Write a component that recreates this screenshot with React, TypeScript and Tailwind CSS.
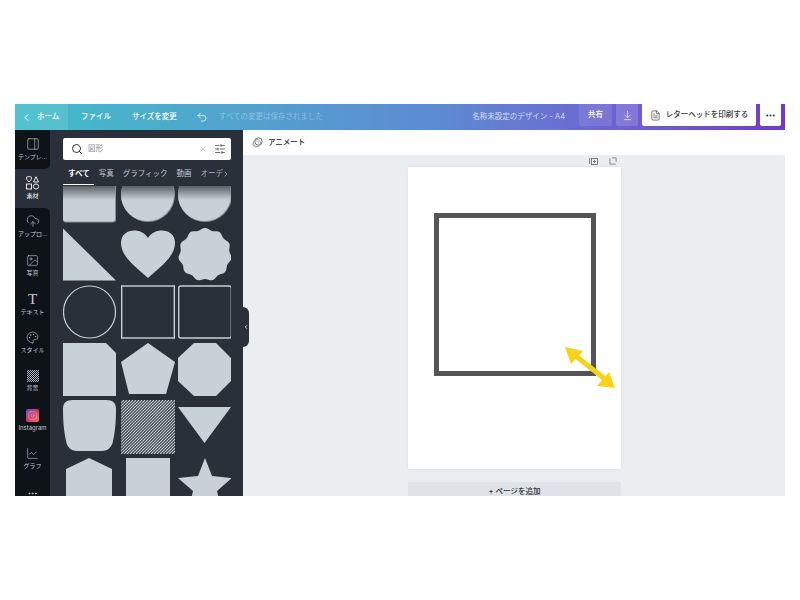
import { ChevronLeft, ChevronRight, Search, X, SlidersHorizontal, Undo2, ArrowDownToLine, FileText, MoreHorizontal, PanelRight, CloudUpload, Image, Palette, LineChart, Instagram } from "lucide-react";
import type { ReactNode } from "react";

const FONT = "font-['Inter','Noto_Sans_CJK_JP',sans-serif]";

function Hatch() {
  return (
    <svg width="12" height="12" viewBox="0 0 12 12" stroke="#c5cbd2" strokeWidth="0.9">
      <clipPath id="hatch-clip">
        <rect width="12" height="12" />
      </clipPath>
      <g clipPath="url(#hatch-clip)">
        {[-10, -8, -6, -4, -2, 0, 2, 4, 6, 8, 10].map((d) => (
          <line key={d} x1={d} y1="12" x2={d + 12} y2="0" />
        ))}
      </g>
    </svg>
  );
}

function ElementsIcon() {
  return (
    <svg width="13" height="14" viewBox="0 0 13 14" fill="none" stroke="currentColor" strokeWidth="0.9">
      <path d="M3 1 C2 0 0.500 0.500 0.500 2 C0.500 3.500 2 5 3 6 C4 5 5.500 3.500 5.500 2 C5.500 0.500 4 0 3 1Z" />
      <path d="M10 0.700 L12.500 6 H7.500Z" />
      <rect x="0.500" y="8" width="5" height="5" />
      <circle cx="10" cy="10.500" r="2.600" />
    </svg>
  );
}

const SIDE = [
  { label: "テンプレ...", icon: <PanelRight size={14} strokeWidth={1.1} /> },
  { label: "素材", icon: <ElementsIcon />, active: true },
  { label: "アップロ...", icon: <CloudUpload size={14} strokeWidth={1.1} /> },
  { label: "写真", icon: <Image size={13} strokeWidth={1.1} /> },
  { label: "テキスト", icon: <span className="font-['Liberation_Serif',serif] text-[15px] font-normal leading-[14px]">T</span> },
  { label: "スタイル", icon: <Palette size={13} strokeWidth={1.1} /> },
  { label: "背景", icon: <Hatch /> },
  { label: "Instagram", icon: <span className="flex h-[13px] w-[13px] items-center justify-center rounded-[2px] bg-gradient-to-br from-[#7a3ab9] via-[#d9306c] to-[#f77737]"><Instagram size={9} strokeWidth={1.5} /></span> },
  { label: "グラフ", icon: <LineChart size={13} strokeWidth={1.1} /> },
];

const F = "#c9d1d8";

// scalloped blob in the second row
const BLOB = Array.from({ length: 96 }, (_, i) => {
  const a = (i / 96) * Math.PI * 2;
  const r = 25.6 + 1.1 * Math.cos(a * 11);
  return `${(27 + r * Math.sin(a)).toFixed(2)},${(26.5 - r * Math.cos(a)).toFixed(2)}`;
}).join(" ");

function Shape({ children }: { children: ReactNode }) {
  return (
    <svg width="54" height="54" viewBox="0 0 54 54" className="block">
      {children}
    </svg>
  );
}

const SHAPES: ReactNode[] = [
  <>
    <defs>
      <linearGradient id="top-shade" gradientUnits="userSpaceOnUse" x1="0" y1="16" x2="0" y2="30">
        <stop offset="0" stopColor="#596068" />
        <stop offset="1" stopColor={F} />
      </linearGradient>
    </defs>
    <rect x="0" y="-6" width="53" height="58.500" rx="3" fill="#8d959d" />
    <rect x="0" y="-6" width="52" height="57.500" rx="3" fill="url(#top-shade)" />
  </>,
  <>
    <circle cx="27" cy="25" r="27" fill="#8d959d" />
    <circle cx="26.500" cy="24.500" r="26.500" fill="url(#top-shade)" />
  </>,
  <>
    <circle cx="27" cy="25" r="27" fill="#8d959d" />
    <circle cx="26.500" cy="24.500" r="26.500" fill="url(#top-shade)" />
  </>,
  <polygon points="0,0.500 53,52.500 0,52.500" fill={F} />,
  <path d="M27 50 C19 42 0 30 0 15 C0 6 7 2.500 13 2.500 C19 2.500 24 5 27 10 C30 5 35 2.500 41 2.500 C47 2.500 54 6 54 15 C54 30 35 42 27 50Z" fill={F} />,
  <polygon points={BLOB} fill={F} />,
  <circle cx="26.500" cy="27" r="26" fill="none" stroke={F} strokeWidth="1.2" />,
  <rect x="0.700" y="1" width="52.600" height="52" fill="none" stroke={F} strokeWidth="1.400" />,
  <rect x="0.700" y="1" width="52.600" height="52" rx="2" fill="none" stroke={F} strokeWidth="1.400" />,
  <polygon points="0,0 43,0 53,10 53,53 0,53" fill={F} />,
  <polygon points="27,0 54,19 45,51 8,51 0,19" fill={F} />,
  <polygon points="16,0 38,0 53,15 53,38 38,53 16,53 0,38 0,15" fill={F} />,
  <path d="M10 0 H43 C50 0 53 3 53 9 C53 22 52 32 50 41 C49 47 45 51 39 51 H14 C8 51 4 47 3 41 C1 32 0 22 0 9 C0 3 3 0 10 0Z" fill={F} />,
  <>
    <clipPath id="stripes-clip">
      <rect width="54" height="54" />
    </clipPath>
    <g clipPath="url(#stripes-clip)">
      {Array.from({ length: 38 }).map((_, i) => (
        <line key={i} x1={i * 3 - 54} y1="54" x2={i * 3} y2="0" stroke={F} strokeWidth="1.100" />
      ))}
    </g>
  </>,
  <polygon points="0,7 53,7 26.500,43" fill={F} />,
  <polygon points="26,0 49,11 49,54 3,54 3,11" fill={F} />,
  <path d="M5 0 H49 V40 C49 48 43 54 35 54 H19 C11 54 5 48 5 40Z" fill={F} />,
  <polygon points="27,0 34,18 54,20 39,33 44,54 27,43 10,54 15,33 0,20 20,18" fill={F} />,
];

export default function App() {
  return (
    <div className={`h-[600px] w-[800px] bg-white pl-[15px] pt-[104px] ${FONT}`}>
      <div className="flex h-[392px] w-[770px] flex-col overflow-hidden">
        {/* top bar */}
        <header className="flex h-[26px] shrink-0 items-center whitespace-nowrap bg-gradient-to-r from-[#3fbdc8] via-[#5c8ad2] via-55% to-[#7436cf] pr-[4px] text-[7.5px] font-medium text-white">
          <div className="flex h-full w-[53px] shrink-0 items-center gap-[5px] bg-white/10 pl-[6px]">
            <ChevronLeft size={11} />
            <span>ホーム</span>
          </div>
          <span className="ml-[13px]">ファイル</span>
          <span className="ml-[21px]">サイズを変更</span>
          <Undo2 size={12} strokeWidth={1.5} className="ml-[19px]" />
          <span className="ml-[11px] font-normal text-white/35">すべての変更は保存されました</span>
          <span className="ml-auto font-normal text-white/75">名称未設定のデザイン - A4</span>
          <span className="ml-[14px] flex h-[22px] w-[33px] shrink-0 items-center justify-center self-start rounded-b-[2px] bg-white/10">共有</span>
          <span className="ml-[4px] flex h-[22px] w-[22px] shrink-0 items-center justify-center self-start rounded-b-[2px] bg-white/15">
            <ArrowDownToLine size={11} strokeWidth={1.4} />
          </span>
          <div className="ml-[4px] flex h-[22px] w-[114px] shrink-0 items-center justify-center gap-[5px] self-start rounded-b-[2px] bg-white text-[#2d3339]">
            <FileText size={11} strokeWidth={1.4} />
            <span>レターヘッドを印刷する</span>
          </div>
          <div className="ml-[4px] flex h-[22px] w-[21px] shrink-0 items-center justify-center self-start rounded-b-[2px] bg-white text-[#2d3339]">
            <MoreHorizontal size={11} strokeWidth={2.5} />
          </div>
        </header>

        <div className="flex min-h-0 flex-1">
          {/* sidebar */}
          <nav className="flex w-[35px] shrink-0 flex-col bg-[#293039]">
            {SIDE.map((s, i) => {
              const beforeActive = SIDE[i + 1]?.active;
              const afterActive = SIDE[i - 1]?.active;
              return (
                <div
                  key={s.label}
                  className={`flex h-[38.75px] shrink-0 flex-col items-center justify-center gap-[1px] overflow-hidden whitespace-nowrap pb-[1px] text-[6px] ${
                    s.active ? "bg-[#293039] text-white" : "bg-[#0e1318] text-[#c5cbd2]"
                  } ${beforeActive ? "rounded-br-[5px]" : ""} ${afterActive ? "rounded-tr-[5px]" : ""}`}
                >
                  {s.icon}
                  <span>{s.label}</span>
                </div>
              );
            })}
            <div className="flex flex-1 justify-center bg-[#0e1318] pt-[9px] text-[#c5cbd2]">
              <MoreHorizontal size={11} />
            </div>
          </nav>

          {/* panel */}
          <aside className="flex w-[193px] shrink-0 flex-col overflow-hidden bg-[#293039] pl-[13px] pr-[12px] pt-[8px]">
            <div className="flex h-[22px] shrink-0 items-center rounded-[2px] bg-white pl-[8px] pr-[5px] text-[7.5px] text-[#80868c]">
              <Search size={12} className="text-[#2d3339]" />
              <span className="ml-[5px] flex-1">図形</span>
              <X size={10} className="text-[#9aa0a6]" strokeWidth={1.1} />
              <SlidersHorizontal size={12} className="ml-[6px] text-[#2d3339]" strokeWidth={1.4} />
            </div>
            <div className="relative mt-[4px] flex h-[22px] shrink-0 items-center gap-[9px] whitespace-nowrap pb-[2px] pl-[5px] text-[7.5px] text-[#c5cbd2]">
              <span className="font-bold text-white">すべて</span>
              <span>写真</span>
              <span>グラフィック</span>
              <span>動画</span>
              <span className="text-white/60">オーデ</span>
              <ChevronRight size={8} className="absolute right-[1px] top-[6px]" />
              <span className="absolute bottom-[1px] left-0 h-[1px] w-[31px] bg-white" />
            </div>
            <div className="min-h-0 flex-1 overflow-hidden">
              <div className="-mt-[16px] grid grid-cols-[54px_54px_54px] gap-x-[3.5px] gap-y-[3.5px]">
                {SHAPES.map((s, i) => (
                  <Shape key={i}>{s}</Shape>
                ))}
              </div>
            </div>
          </aside>

          {/* main */}
          <main className="relative flex min-w-0 flex-1 flex-col bg-[#ebeef1]">
            <div className="flex h-[25px] shrink-0 items-center gap-[5px] bg-white pl-[9px] text-[7.5px] font-medium text-[#1f2429]">
              <svg width="11" height="11" viewBox="0 0 11 11" fill="none" stroke="#4a5056" strokeWidth="0.8">
                <circle cx="6.500" cy="4.500" r="3.700" />
                <circle cx="5" cy="6" r="3.700" stroke="#8a9096" />
                <circle cx="4" cy="7" r="3.200" stroke="#a6acb2" />
              </svg>
              <span>アニメート</span>
            </div>
            <div className="absolute left-0 top-[177px] z-10 flex h-[40px] w-[6px] items-center justify-center rounded-r-[6px] bg-[#293039] text-white">
              <ChevronLeft size={6} strokeWidth={3} />
            </div>
            <div className="flex h-[12px] shrink-0 items-center justify-end gap-[11px] pr-[168px] text-[#5d6369]">
              <svg width="9" height="9" viewBox="0 0 9 9" fill="none" stroke="currentColor" strokeWidth="0.8">
                <rect x="2.500" y="1.500" width="6" height="6" />
                <path d="M0.500 1v6M5.500 3v3M4 4.500h3" />
              </svg>
              <svg width="8" height="8" viewBox="0 0 9 9" fill="none" stroke="currentColor" strokeWidth="0.8">
                <path d="M1 1.500v6.500h6.500M3.500 1h4.500v4.500" />
              </svg>
            </div>
            <div className="ml-[165px] flex flex-col">
              <div className="relative h-[302px] w-[213px] bg-white pl-[26px] pt-[46px] shadow-[0_0_3px_rgba(0,0,0,0.08)]">
                <div className="h-[163px] w-[162px] border-[5px] border-[#555555]" />
                <svg width="54" height="46" viewBox="0 0 54 46" className="absolute left-[156px] top-[180px]">
                  <line x1="8" y1="6" x2="46" y2="36" stroke="#f7d21b" strokeWidth="5" />
                  <polygon points="1,0 19,4 7,17" fill="#f7d21b" />
                  <polygon points="51,41 33,39 45,25" fill="#f7d21b" />
                </svg>
              </div>
              <div className="mt-[13px] flex h-[24px] w-[213px] items-start justify-center bg-[#dfe2e6] pt-[4px] text-[7.5px] font-medium text-[#2d3339]">
                + ページを追加
              </div>
            </div>
          </main>
        </div>
      </div>
    </div>
  );
}
